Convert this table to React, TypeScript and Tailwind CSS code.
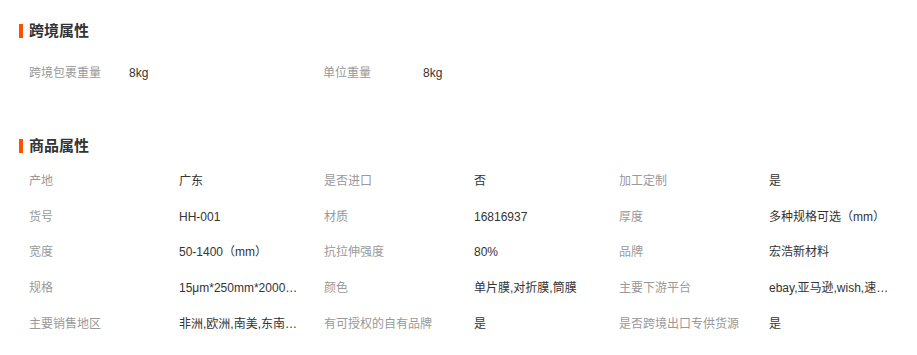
import React from 'react'

const crossAttrs = [
  { label: '跨境包裹重量', value: '8kg' },
  { label: '单位重量', value: '8kg' },
]

const goodsAttrs = [
  { label: '产地', value: '广东' },
  { label: '是否进口', value: '否' },
  { label: '加工定制', value: '是' },
  { label: '货号', value: 'HH-001' },
  { label: '材质', value: '16816937' },
  { label: '厚度', value: '多种规格可选（mm）' },
  { label: '宽度', value: '50-1400（mm）' },
  { label: '抗拉伸强度', value: '80%' },
  { label: '品牌', value: '宏浩新材料' },
  { label: '规格', value: '15μm*250mm*2000m,20μm*500mm' },
  { label: '颜色', value: '单片膜,对折膜,筒膜' },
  { label: '主要下游平台', value: 'ebay,亚马逊,wish,速卖通' },
  { label: '主要销售地区', value: '非洲,欧洲,南美,东南亚,北美' },
  { label: '有可授权的自有品牌', value: '是' },
  { label: '是否跨境出口专供货源', value: '是' },
]

const Title = ({ text }: { text: string }) => (
  <div className="flex h-[18px] items-center">
    <span className="h-[14px] w-[4px] bg-[#ff5000]" />
    <h2 className="ml-[6px] text-[15px] font-bold leading-[18px] text-[#333]">{text}</h2>
  </div>
)

const App = () => {
  return (
    <div
      className="h-[355px] w-[917px] bg-white pl-[19px] pt-[22px]"
      style={{ fontFamily: '"Liberation Sans", "Noto Sans CJK SC", sans-serif' }}
    >
      <Title text="跨境属性" />
      <div className="mt-[15px] flex h-[36px] items-center pl-[10px] text-[12px]">
        {crossAttrs.map((a) => (
          <div key={a.label} className="flex w-[294px]">
            <span className="w-[100px] text-[#999]">{a.label}</span>
            <span className="w-[194px] text-[#333]">{a.value}</span>
          </div>
        ))}
      </div>

      <div className="mt-[46px]">
        <Title text="商品属性" />
      </div>
      <div className="mt-[8px] grid grid-cols-[295px_295px_295px] pl-[10px] text-[12px]">
        {goodsAttrs.map((a) => (
          <div key={a.label} className="flex h-[35.75px] items-center">
            <span className="w-[150px] shrink-0 truncate text-[#999]">{a.label}</span>
            <span className="w-[124px] truncate text-[#333]">{a.value}</span>
          </div>
        ))}
      </div>
    </div>
  )
}

export default App
